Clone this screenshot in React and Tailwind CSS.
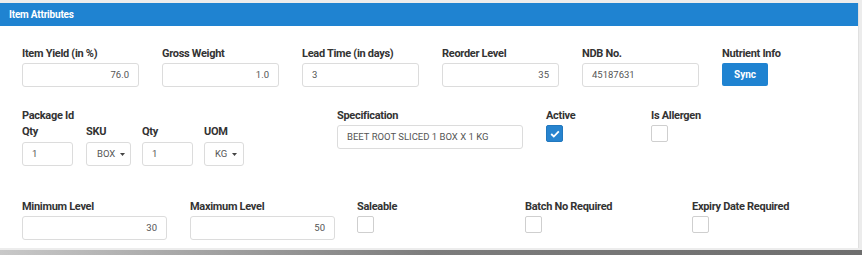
const font = { fontFamily: "Roboto, 'Liberation Sans', sans-serif" };

const Label = ({ children, className = "" }) => (
  <div className={"text-[11px] leading-[14px] font-bold tracking-[-0.3px] text-[#333] whitespace-nowrap " + className}>{children}</div>
);

const TextBox = ({ value, width, right }) => (
  <div
    className={
      "h-[24px] border border-[#dcdcdc] rounded-[3px] bg-white flex items-center text-[9.5px] text-[#555] px-[9px] " +
      (right ? "justify-end " : "justify-start ") +
      width
    }
  >
    {value}
  </div>
);

const SelectBox = ({ value, width }) => (
  <div className={"h-[24px] border border-[#dcdcdc] rounded-[3px] bg-white flex items-center gap-[5px] pl-[10px] text-[9.5px] text-[#555] " + width}>
    <span>{value}</span>
    <svg width="5" height="3" viewBox="0 0 5 3">
      <path d="M0 0h5L2.5 3z" fill="#444" />
    </svg>
  </div>
);

const Check = ({ checked }) =>
  checked ? (
    <div className="w-[17px] h-[17px] bg-[#2784cf] border border-[#2278be] rounded-[2px] flex items-center justify-center">
      <svg width="10" height="8" viewBox="0 0 10 8">
        <path d="M1.2 4l2.6 2.5L8.8 1.3" stroke="white" strokeWidth="1.8" fill="none" />
      </svg>
    </div>
  ) : (
    <div className="w-[17px] h-[17px] border border-[#cfcfcf] rounded-[2px] bg-white" />
  );

export default function App() {
  const row1 = [
    { label: "Item Yield (in %)", value: "76.0", right: true },
    { label: "Gross Weight", value: "1.0", right: true },
    { label: "Lead Time (in days)", value: "3" },
    { label: "Reorder Level", value: "35", right: true },
    { label: "NDB No.", value: "45187631" },
  ];
  return (
    <div className="w-[862px] h-[255px] bg-[#ececec] pt-[3px] overflow-hidden" style={font}>
      <div className="w-[859px] h-[245px] bg-white border-r border-[#e0e0e0]">
        <div className="h-[23px] bg-[#1f83d1] flex items-center pl-[9px] text-[10px] tracking-[-0.2px] font-bold text-white">
          Item Attributes
        </div>
        <div className="px-[22px] pt-[21px]">
          <div className="flex gap-[23px]">
            {row1.map((f) => (
              <div key={f.label} className="w-[117px]">
                <Label className="mb-[2px]">{f.label}</Label>
                <TextBox value={f.value} right={f.right} width="w-[117px]" />
              </div>
            ))}
            <div>
              <Label className="mb-[2px]">Nutrient Info</Label>
              <button className="block w-[46px] h-[23px] bg-[#1f83d1] rounded-[2px] text-white text-[10px] font-bold">Sync</button>
            </div>
          </div>

          <div className="flex mt-[22px]">
            <div className="w-[315px]">
              <Label>Package Id</Label>
              <div className="flex mt-[2px]">
                <div className="w-[64px]">
                  <Label className="mb-[3px]">Qty</Label>
                  <TextBox value="1" width="w-[51px]" />
                </div>
                <div className="w-[56px]">
                  <Label className="mb-[3px]">SKU</Label>
                  <SelectBox value="BOX" width="w-[45px]" />
                </div>
                <div className="w-[62px]">
                  <Label className="mb-[3px]">Qty</Label>
                  <TextBox value="1" width="w-[51px]" />
                </div>
                <div>
                  <Label className="mb-[3px]">UOM</Label>
                  <SelectBox value="KG" width="w-[40px]" />
                </div>
              </div>
            </div>
            <div className="w-[209px]">
              <Label className="mb-[2px]">Specification</Label>
              <TextBox value="BEET ROOT SLICED 1 BOX X 1 KG" width="w-[186px]" />
            </div>
            <div className="w-[105px]">
              <Label className="mb-[2px]">Active</Label>
              <Check checked />
            </div>
            <div>
              <Label className="mb-[2px]">Is Allergen</Label>
              <Check />
            </div>
          </div>

          <div className="flex mt-[34px]">
            <div className="w-[168px]">
              <Label className="mb-[2px]">Minimum Level</Label>
              <TextBox value="30" right width="w-[145px]" />
            </div>
            <div className="w-[167px]">
              <Label className="mb-[2px]">Maximum Level</Label>
              <TextBox value="50" right width="w-[145px]" />
            </div>
            <div className="w-[168px]">
              <Label className="mb-[2px]">Saleable</Label>
              <Check />
            </div>
            <div className="w-[167px]">
              <Label className="mb-[2px]">Batch No Required</Label>
              <Check />
            </div>
            <div>
              <Label className="mb-[2px]">Expiry Date Required</Label>
              <Check />
            </div>
          </div>
        </div>
      </div>
      <div className="h-[2px]" />
      <div className="h-[5px] bg-gradient-to-r from-[#c8c8c8] via-[#7c7c7c] to-[#6e6e6e]" />
    </div>
  );
}
